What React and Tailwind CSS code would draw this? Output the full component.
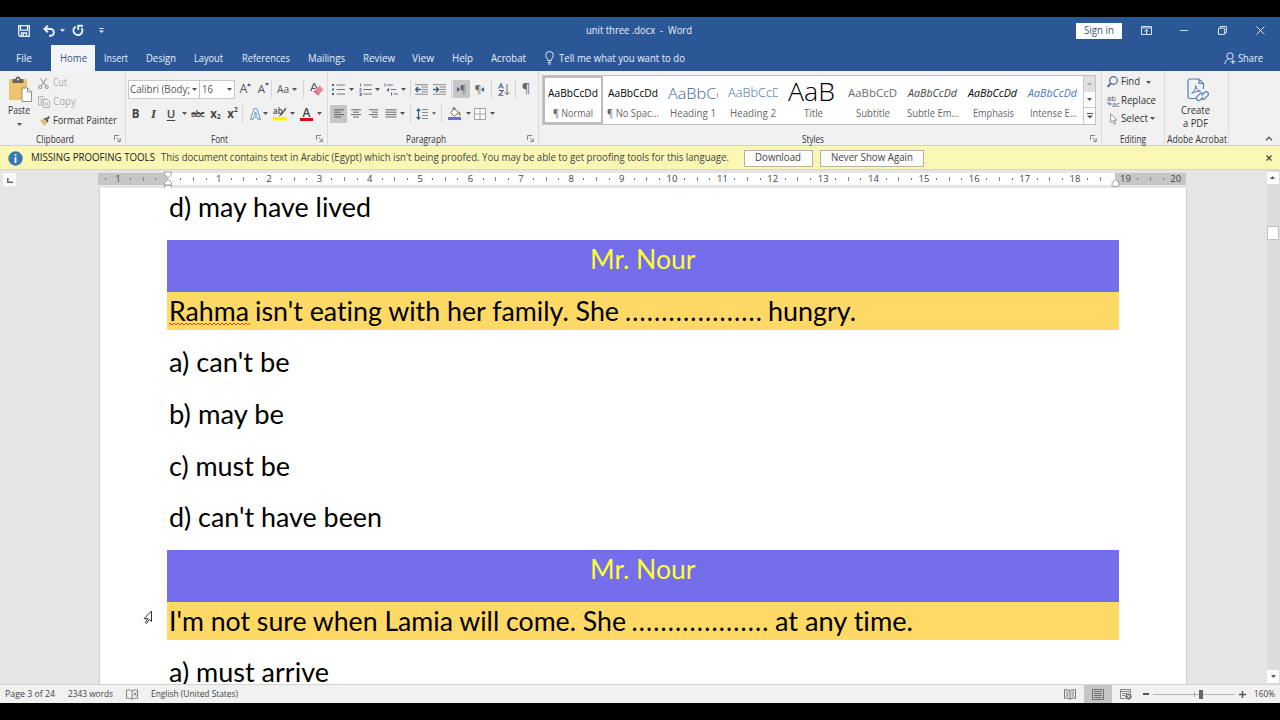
import { useLayoutEffect, useRef } from 'react'

/* Text run fitted to a fixed width, condensed by default or letter-spaced */
function T({ w, spaced, className = '', children }) {
  const box = useRef(null)
  const run = useRef(null)
  useLayoutEffect(() => {
    box.current.style.width = 'auto'
    run.current.style.transform = 'none'
    run.current.style.letterSpacing = '0px'
    const natural = run.current.getBoundingClientRect().width
    box.current.style.width = `${w}px`
    if (spaced) run.current.style.letterSpacing = `${(w - natural) / run.current.textContent.length}px`
    else run.current.style.transform = `scaleX(${w / natural})`
  }, [w, spaced, children])
  return (
    <span ref={box} className={`inline-block shrink-0 text-left whitespace-pre ${className}`}>
      <span ref={run} className="inline-block origin-left">{children}</span>
    </span>
  )
}

function Cell({ className = '', children }) {
  return <div className={`flex shrink-0 items-center justify-center ${className}`}>{children}</div>
}

function Caret({ className = 'w-[10px]', color = '#555' }) {
  return (
    <Cell className={className}>
      <svg width="5" height="3" viewBox="0 0 5 3"><path d="M0 0h5L2.5 3z" fill={color} /></svg>
    </Cell>
  )
}

function Sep({ className = 'h-[18px]' }) {
  return <div className={`w-px shrink-0 bg-[#d4d4d4] ${className}`} />
}

function Launcher() {
  return (
    <svg width="7" height="7" viewBox="0 0 7 7" fill="none" stroke="#777" strokeWidth="0.9">
      <path d="M0.5 5V0.5H5M2.8 2.8l3 3M6.3 3.5v3h-3" />
    </svg>
  )
}

function Group({ label, labelWidth, className, launcher, children }) {
  return (
    <div className={`flex h-[74px] shrink-0 flex-col border-r border-[#dadada] ${className}`}>
      <div className="h-[60px] shrink-0">{children}</div>
      <div className="flex h-[14px] shrink-0 items-center pt-px text-[10px] leading-[14px] text-[#333]">
        <div className="flex flex-1 justify-center"><T w={labelWidth}>{label}</T></div>
        {launcher && <div className="flex w-[15px] justify-center"><Launcher /></div>}
      </div>
    </div>
  )
}

/* Paragraph alignment icon: list of [x1, x2] strokes */
function Lines({ rows, h = 11 }) {
  return (
    <svg width="12" height={h} viewBox={`0 0 12 ${h}`} stroke="#666" strokeWidth="1">
      {rows.map(([a, b], i) => <path key={i} d={`M${a} ${i * 2.4 + 0.8}H${b}`} />)}
    </svg>
  )
}

function TitleBar() {
  return (
    <div className="flex h-[27px] items-center text-[#e8f2ff]">
      <div className="flex w-[586px] items-center pl-[18px]">
        <svg width="12" height="12" viewBox="0 0 12 12" fill="none" stroke="#e4f2fb" strokeWidth="1.3">
          <path d="M0.7 0.7h10.6v10.6H2L0.7 10zM2.5 1v4.2h7V1M3.5 11V8h5v3M5.3 9v2" />
        </svg>
        <svg className="ml-[13px]" width="12" height="12" viewBox="0 0 12 12" fill="none" stroke="#e4f2fb" strokeWidth="1.9">
          <path d="M4.8 0.7L1.3 4l3.5 3.3M1.5 4H7.5a3.4 3.4 0 0 1 0 6.8H6" />
        </svg>
        <Caret className="w-[14px]" color="#dcebf8" />
        <svg className="ml-[3px]" width="12" height="13" viewBox="0 0 12 13" fill="none" stroke="#e4f2fb" strokeWidth="1.9">
          <path d="M3.7 2.6A4.5 4.5 0 1 0 9.6 4M6.2 6V1.7H11" />
        </svg>
        <svg className="ml-[15px]" width="5" height="6" viewBox="0 0 5 6" fill="#dcebf8"><path d="M0.5 0h4v1h-4zM0 2.5h5L2.5 5z" /></svg>
      </div>
      <T w={106} className="text-[10.5px]">unit three .docx  -  Word</T>
      <Cell className="ml-[384px] h-[16px] w-[46px] bg-[#fdfdfe] text-[10.5px] text-[#3b5685]"><T w={30}>Sign in</T></Cell>
      <svg className="ml-[19px]" width="11" height="9" viewBox="0 0 11 9" fill="none" stroke="#d8e8fa" strokeWidth="1">
        <path d="M0.5 0.5h10v8H0.5zM0.5 2h10M5.5 8V3.8M3.5 5.5l2-1.9 2 1.9" />
      </svg>
      <div className="ml-[28px] h-px w-[8px] bg-[#c5d9f2]" />
      <svg className="ml-[30px]" width="9" height="9" viewBox="0 0 9 9" fill="none" stroke="#d8e8fa" strokeWidth="1">
        <path d="M0.5 2.2h6.2v6.2H0.5zM2.2 2V0.5h6.2v6.2H7" />
      </svg>
      <svg className="ml-[29px]" width="9" height="9" viewBox="0 0 9 9" stroke="#d8e8fa" strokeWidth="1"><path d="M0.5 0.5l8 8M8.5 0.5l-8 8" /></svg>
    </div>
  )
}

function Tabs() {
  return (
    <div className="flex h-[27px] items-center pt-px text-[11px] text-[#e6effa]">
      <T w={16} className="ml-[16px]">File</T>
      <Cell className="ml-[19px] h-full w-[44px] bg-[#f3f4f6] text-[#3b5685]"><T w={27}>Home</T></Cell>
      <T w={24} className="ml-[9px]">Insert</T>
      <T w={30} className="ml-[18px]">Design</T>
      <T w={29} className="ml-[18px]">Layout</T>
      <T w={48} className="ml-[19px]">References</T>
      <T w={37} className="ml-[18px]">Mailings</T>
      <T w={32} className="ml-[18px]">Review</T>
      <T w={22} className="ml-[17px]">View</T>
      <T w={21} className="ml-[18px]">Help</T>
      <T w={35} className="ml-[18px]">Acrobat</T>
      <svg className="ml-[19px]" width="9" height="14" viewBox="0 0 9 14" fill="none" stroke="#e6effa" strokeWidth="1">
        <path d="M2.8 9.5C2.8 7.5 0.7 6.8 0.7 4.3a3.8 3.8 0 0 1 7.6 0c0 2.5-2.1 3.2-2.1 5.2zM2.8 11.3h3.4M3.3 13h2.4" />
      </svg>
      <T w={126} className="ml-[5px]">Tell me what you want to do</T>
      <svg className="ml-[539px]" width="12" height="13" viewBox="0 0 12 13" fill="none" stroke="#d8e8fa" strokeWidth="1">
        <circle cx="6" cy="4" r="3.2" /><path d="M0.8 12c0.3-3 1.8-4.6 3.8-5M8.8 7.5v4.6M6.5 9.8h5" />
      </svg>
      <T w={25} className="ml-[2px]">Share</T>
    </div>
  )
}

function Clipboard() {
  return (
    <Group label="Clipboard" labelWidth={38} className="w-[126px]" launcher>
      <div className="flex h-full">
        <div className="flex w-[38px] flex-col items-center pt-[5px]">
          <svg className="ml-[3px]" width="25" height="26" viewBox="0 0 25 26">
            <rect x="1" y="3" width="18" height="21" rx="1" fill="#eec36e" />
            <path d="M4.500 3h3a2.500 2.500 0 0 1 5 0h3v4h-11z" fill="#66625d" />
            <circle cx="10" cy="3.500" r="1" fill="#eee" />
            <path d="M14 12h5.500l4 4v9.500H14z" fill="#fff" stroke="#777" strokeWidth="0.8" />
            <path d="M19.500 12v4h4" fill="none" stroke="#777" strokeWidth="0.8" />
          </svg>
          <T w={22} className="mt-px text-[10.5px] leading-[15px] text-[#333]">Paste</T>
          <Caret className="mt-[3px] h-[6px] w-[10px]" />
        </div>
        <div className="flex flex-col pt-[3px] text-[10.5px] text-[#aaa]">
          <div className="flex h-[18.500px] items-center">
            <svg width="11" height="11" viewBox="0 0 11 11" fill="none" stroke="#999" strokeWidth="1.1">
              <path d="M2.500 0.500l5 7M8.500 0.500l-5 7" /><circle cx="2.300" cy="9" r="1.500" /><circle cx="8.700" cy="9" r="1.500" />
            </svg>
            <T w={14} className="ml-[4px]">Cut</T>
          </div>
          <div className="flex h-[19px] items-center">
            <svg width="12" height="12" viewBox="0 0 12 12" fill="#f3f3f3" stroke="#aaa" strokeWidth="0.9">
              <path d="M0.500 0.500h4.500l1.500 1.500v7h-6zM2 3h3M2 5h3M2 7h3" /><path d="M5.500 3.500H10l1.500 1.500v6.500h-6zM7 7h3M7 9h3" />
            </svg>
            <T w={23} className="ml-[3px]">Copy</T>
          </div>
          <div className="flex h-[19px] items-center text-[#333]">
            <svg className="ml-[2px]" width="10" height="10" viewBox="0 0 10 10">
              <path d="M0 4.500l3-1.500 4 4-2.500 3z" fill="#e8bb66" /><path d="M3.500 2.500l4.200 4.200L8.500 5 5.300 1.700z" fill="#555" /><path d="M6.800 3.200L9.200 0.800" stroke="#555" strokeWidth="2" />
            </svg>
            <T w={64} className="ml-[3px]">Format Painter</T>
          </div>
        </div>
      </div>
    </Group>
  )
}

function FontGroup() {
  return (
    <Group label="Font" labelWidth={17} className="w-[202px]" launcher>
      <div className="flex h-[26px] items-center pt-[10px] pl-[2px] text-[#555]">
        <div className="flex h-[19px] w-[72px] shrink-0 items-center border border-[#c8c8c8] bg-white pl-px text-[11px]">
          <T w={60}>Calibri (Body;</T><Caret className="ml-px w-[7px]" />
        </div>
        <div className="flex h-[19px] w-[35px] shrink-0 items-center border border-l-0 border-[#c8c8c8] bg-white pl-[2px] text-[11px]">
          <T w={11}>16</T><Caret className="ml-[11px] w-[10px]" />
        </div>
        <Cell className="w-[21px] text-[12.500px]">A<svg className="mb-[10px]" width="4" height="3" viewBox="0 0 4 3"><path d="M0 3L2 0l2 3z" fill="#40608e" /></svg></Cell>
        <Cell className="w-[15px] text-[11.500px]">A<svg className="mb-[10px]" width="4" height="3" viewBox="0 0 4 3"><path d="M0 0h4L2 3z" fill="#40608e" /></svg></Cell>
        <Sep />
        <T w={12} className="ml-[5px] text-[11px]">Aa</T>
        <Caret className="w-[10px]" /><div className="w-[4px]" />
        <Sep />
        <svg className="ml-[6px]" width="14" height="13" viewBox="0 0 14 13">
          <path d="M0.800 8L3.700 0.800h1L6.500 5M2 5.500h3.500" fill="none" stroke="#555" strokeWidth="1.200" />
          <path d="M9.500 2.500l4 4-5.500 6-4.500-4z" fill="#e58a9c" /><path d="M3.500 8.500l1.500-1.500 4.500 4L8 12.500z" fill="#d9718a" />
        </svg>
      </div>
      <div className="flex h-[34px] items-center pb-px text-[11.500px] text-[#444]">
        <Cell className="w-[19px] font-bold">B</Cell>
        <Cell className="w-[17px] font-['Liberation_Serif'] text-[13px] font-bold italic">I</Cell>
        <Cell className="w-[18px] font-semibold underline underline-offset-2">U</Cell>
        <Caret className="w-[9px]" />
        <Cell className="w-[17px] text-[9px] font-semibold tracking-[-0.7px]"><span className="line-through">abc</span></Cell>
        <Cell className="w-[19px] font-bold">x<span className="mt-[7px] text-[6.500px]">2</span></Cell>
        <Cell className="w-[15px] font-bold">x<span className="mb-[8px] text-[6.500px]">2</span></Cell>
        <div className="w-[2px]" /><Sep />
        <svg className="ml-[7px]" width="11" height="12" viewBox="0 0 11 12" fill="#fff" stroke="#5f8fc9" strokeWidth="1">
          <path d="M4.200 0.600h2.600l3.700 10.800H8.200L7.400 9H3.600l-0.800 2.400H0.500zM5.500 3.800L4.300 7h2.400z" />
        </svg>
        <Caret className="w-[9px]" />
        <svg className="ml-[3px]" width="14" height="15" viewBox="0 0 14 15">
          <rect x="0" y="11" width="14" height="3.500" fill="#fff200" />
          <path d="M12.500 1.500L7.500 8l-2 2.500 3-1L13.500 3z" fill="#666" />
          <text x="0" y="8" fontSize="8" fontWeight="600" fill="#444">ab</text>
        </svg>
        <Caret className="w-[11px]" />
        <Cell className="ml-[2px] w-[13px] flex-col text-[12px] leading-[11px] font-semibold">A<div className="h-[3px] w-[13px] bg-[#dc0a0a]" /></Cell>
        <Caret className="w-[12px]" />
      </div>
    </Group>
  )
}

function ListIcon({ kind }) {
  return (
    <svg width="14" height="13" viewBox="0 0 14 13" stroke="#777" strokeWidth="1">
      {kind === 'bullet' && <><path d="M4.500 2H13M4.500 6.500H13M4.500 11H13" /><g fill="#40608e" stroke="none"><rect y="1" width="2" height="2" /><rect y="5.500" width="2" height="2" /><rect y="10" width="2" height="2" /></g></>}
      {kind === 'number' && <><path d="M4.500 2H13M4.500 6.500H13M4.500 11H13" /><path d="M1.500 0.500v3M0.500 5.500h1.500v1l-1.500 1.500h2M0.500 10h2v2.500h-2M1 11.200h1" fill="none" stroke="#40608e" strokeWidth="0.800" /></>}
      {kind === 'multi' && <><path d="M3 2H9M6.500 6.500H12M9.500 11H14" /><path d="M1 0.500v3M4.500 5v3h-1.200v-1.500h1M7.500 9.500v3" fill="none" stroke="#40608e" strokeWidth="0.900" /></>}
    </svg>
  )
}

function Indent({ out }) {
  return (
    <svg width="13" height="11" viewBox="0 0 13 11" fill="none">
      <path d="M0 0.700H13M6.500 3H13M6.500 5.400H13M6.500 7.800H13M0 10.200H13" stroke="#888" />
      <path d={out ? 'M6 5.500H1M3 3L0.800 5.500 3 8' : 'M0 5.500H5.200M3.200 3l2.200 2.500L3.200 8'} stroke="#2f6385" strokeWidth="1.500" />
    </svg>
  )
}

function Paragraph() {
  return (
    <Group label="Paragraph" labelWidth={40} className="w-[211px]" launcher>
      <div className="flex h-[26px] items-center pt-[10px]">
        <Cell className="w-[20px] pl-[2px]"><ListIcon kind="bullet" /></Cell><Caret className="w-[7px]" />
        <Cell className="w-[19px] pl-[2px]"><ListIcon kind="number" /></Cell><Caret className="w-[7px]" />
        <Cell className="w-[19px]"><ListIcon kind="multi" /></Cell><Caret className="w-[6px]" />
        <Cell className="w-[4px]" /><Sep />
        <Cell className="w-[21px]"><Indent out /></Cell>
        <Cell className="w-[14px]"><Indent /></Cell>
        <Cell className="w-[5px]" /><Sep />
        <Cell className="ml-px h-[18px] w-[17px] bg-[#c6c6c6] text-[10px] text-[#666]"><svg width="3" height="5" viewBox="0 0 3 5"><path d="M0 0v5l3-2.500z" fill="#2f6385" /></svg>¶</Cell>
        <Cell className="w-[19px] text-[10px] text-[#666]">¶<svg width="3" height="5" viewBox="0 0 3 5"><path d="M3 0v5L0 2.500z" fill="#2f6385" /></svg></Cell>
        <Cell className="w-[2px]" /><Sep />
        <Cell className="w-[23px]">
          <svg width="12" height="13" viewBox="0 0 12 13" fill="none">
            <path d="M0.600 5.500L3 0.500l2.400 5M1.300 4h3.400" stroke="#4272ad" strokeWidth="1.100" />
            <path d="M1 7.500h4L1 12.300h4.300" stroke="#5b4d86" strokeWidth="1.100" />
            <path d="M9 1v10.500M6.800 9.300L9 11.600l2.300-2.300" stroke="#666" />
          </svg>
        </Cell>
        <Sep />
        <Cell className="w-[20px] text-[13px] text-[#666]">¶</Cell>
      </div>
      <div className="flex h-[34px] items-center pb-px">
        <Cell className="ml-[2px] h-[18px] w-[17px] bg-[#c6c6c6]"><Lines rows={[[1, 11], [1, 8], [1, 11], [1, 8]]} h={9} /></Cell>
        <Cell className="w-[17px]"><Lines rows={[[1, 11], [3, 9], [1, 11], [3, 9]]} h={9} /></Cell>
        <Cell className="w-[18px]"><Lines rows={[[2, 11], [5, 11], [2, 11], [5, 11]]} h={9} /></Cell>
        <Cell className="w-[17px]"><Lines rows={[[0.5, 11.5], [0.5, 11.5], [0.5, 11.5], [0.5, 11.5]]} h={9} /></Cell>
        <Caret className="w-[7px]" />
        <Cell className="w-[4px]" /><Sep />
        <Cell className="w-[21px]">
          <svg width="12" height="12" viewBox="0 0 12 12" fill="none">
            <path d="M2.500 1v10M0.700 3L2.500 1l1.800 2M0.700 9l1.800 2 1.800-2" stroke="#2f6385" strokeWidth="1.200" />
            <path d="M6 1.500h6M6 4.500h6M6 7.500h6M6 10.500h6" stroke="#888" />
          </svg>
        </Cell>
        <Caret className="w-[4px]" />
        <Cell className="w-[5px]" /><Sep />
        <Cell className="w-[24px]">
          <svg width="13" height="13" viewBox="0 0 13 13" fill="none">
            <path d="M2.500 5.500L6.500 1.800l4 4-4 3.500zM5 3V0.800h2v2" fill="#fff" stroke="#666" />
            <path d="M10.500 5c1.200 0.700 1.500 2 1.300 3.500" stroke="#666" strokeWidth="1.300" />
            <rect y="10" width="13" height="3" fill="#7367d9" />
          </svg>
        </Cell>
        <Caret className="w-[5px]" />
        <Cell className="w-[17px]">
          <svg width="12" height="12" viewBox="0 0 12 12" fill="#fff" stroke="#999" strokeWidth="0.900"><path d="M0.500 0.500h11v11H0.500zM6 0.500v11M0.500 6h11" /></svg>
        </Cell>
        <Caret className="w-[8px]" />
      </div>
    </Group>
  )
}

const styles = [
  { name: '¶ Normal', nw: 40, sample: 'AaBbCcDd', w: 50, cls: 'text-[10.5px] font-medium text-black' },
  { name: '¶ No Spac...', nw: 52, sample: 'AaBbCcDd', w: 50, cls: 'text-[10.5px] font-medium text-black' },
  { name: 'Heading 1', nw: 46, sample: 'AaBbCc', w: 56, cls: 'font-light text-[15px] text-[#3d6590]' },
  { name: 'Heading 2', nw: 46, sample: 'AaBbCcD', w: 53, cls: 'font-light text-[12.5px] text-[#44709e]' },
  { name: 'Title', nw: 19, sample: 'AaB', w: 47, cls: 'font-light text-[25px] leading-[24px] text-black' },
  { name: 'Subtitle', nw: 34, sample: 'AaBbCcD', w: 49, cls: 'text-[10px] text-[#6b6b6b]' },
  { name: 'Subtle Em...', nw: 52, sample: 'AaBbCcDd', w: 49, cls: 'text-[10.5px] italic text-[#444]' },
  { name: 'Emphasis', nw: 41, sample: 'AaBbCcDd', w: 49, cls: 'text-[10.5px] italic font-medium text-black' },
  { name: 'Intense E...', nw: 47, sample: 'AaBbCcDd', w: 49, cls: 'text-[10.5px] italic text-[#4a78b5]' },
]

function Styles() {
  return (
    <Group label="Styles" labelWidth={22} className="w-[563px]" launcher>
      <div className="mt-[4px] ml-[3px] flex h-[50px] w-[554px] border border-[#c3c3c3] bg-white">
        {styles.map((s, i) => (
          <div key={s.name} className={`flex w-[60px] shrink-0 flex-col items-center border-2 ${i === 0 ? 'border-[#bcbcbc]' : 'border-transparent'}`}>
            <div className={`flex h-[27px] w-[50px] items-center ${i === 4 ? 'pb-[2px]' : 'pt-[4px]'} ${s.w > 50 ? 'overflow-hidden' : ''}`}>
              <T w={s.w} className={s.cls}>{s.sample}</T>
            </div>
            <T w={s.nw} className="mt-px text-[10.5px] leading-[15px] text-[#666]">{s.name}</T>
          </div>
        ))}
        <div className="flex w-[12px] flex-col border-l border-[#c8c8c8]">
          <Caret className="h-[16px] rotate-180 bg-[#e0e0e0]" color="#aaa" />
          <Caret className="h-[16px] border-b border-[#c8c8c8]" />
          <Cell className="h-[16px]"><svg width="6" height="6" viewBox="0 0 6 6" fill="#555"><path d="M0 0h6v1H0zM0 2.500h6L3 5.500z" /></svg></Cell>
        </div>
      </div>
    </Group>
  )
}

function Editing() {
  return (
    <Group label="Editing" labelWidth={26} className="w-[63px]">
      <div className="flex flex-col pt-[2px] pl-[5px] text-[10.5px] text-[#333]">
        <div className="flex h-[18.500px] items-center">
          <svg width="11" height="12" viewBox="0 0 11 12" fill="none" stroke="#44678f"><circle cx="6.500" cy="4.500" r="3.800" strokeWidth="1.200" /><path d="M3.800 7.300L0.600 11" strokeWidth="1.800" /></svg>
          <T w={19} className="ml-[3px]">Find</T><Caret className="ml-[4px] w-[8px]" />
        </div>
        <div className="flex h-[18px] items-center">
          <svg width="13" height="12" viewBox="0 0 13 12">
            <text x="0" y="5.500" fontSize="7.500" fill="#555">ab</text><text x="5" y="11.500" fontSize="7.500" fill="#40608e">ac</text>
            <path d="M1 7v2h3M2.800 7.500L4.300 9l-1.500 1.500" fill="none" stroke="#40608e" strokeWidth="0.800" />
          </svg>
          <T w={35} className="ml-px">Replace</T>
        </div>
        <div className="flex h-[18px] items-center">
          <svg className="ml-[3px]" width="8" height="12" viewBox="0 0 8 12" fill="#fff" stroke="#888" strokeWidth="0.900"><path d="M0.600 0.800v8.700l2-1.800 1.500 3.500 1.400-0.600L4 7.200h3z" /></svg>
          <T w={27} className="ml-[3px]">Select</T><Caret className="w-[8px]" />
        </div>
      </div>
    </Group>
  )
}

function Acrobat() {
  return (
    <Group label="Adobe Acrobat" labelWidth={60} className="w-[64px]">
      <div className="flex flex-col items-center pt-[7px] pr-[2px] text-[10.500px] leading-[13px] text-[#333]">
        <svg className="ml-[5px]" width="22" height="26" viewBox="0 0 22 26" fill="none" stroke="#5680b8" strokeWidth="1.200">
          <path d="M9 20.500H3a2 2 0 0 1-2-2V3a2 2 0 0 1 2-2h9l4.500 4.500V11M12 1v4.500h4.500" />
          <path d="M4.500 15.500c2.500-1.500 4.500-5 4.200-8 0.500 3.500 2.300 5.300 4.800 5.500-3.500 0-6.500 1-9 2.500z" strokeWidth="1" />
          <path d="M14.500 17.500l3-3a2.200 2.200 0 0 1 3.200 3.200l-3 3a2.200 2.200 0 0 1-3 0M16.300 18.800l-3 3a2.200 2.200 0 0 1-3.200-3.200l3-3a2.200 2.200 0 0 1 3 0" />
        </svg>
        <T w={29}>Create</T>
        <T w={25}>a PDF</T>
      </div>
    </Group>
  )
}

/* One tick cell per quarter centimetre, 0 at the left margin */
const ticks = Array.from({ length: 86 }, (_, i) => i - 5)

function Ruler() {
  return (
    <div className="relative ml-[98px] flex h-[12px] w-[1088px]">
      <div className="w-[70px] bg-[#c6c6c6]" />
      <div className="w-[947px] bg-white" />
      <div className="flex-1 bg-[#c6c6c6]" />
      <div className="absolute inset-y-0 left-[1px] flex text-[9.500px] text-[#444]">
        {ticks.map((k) => (
          <Cell key={k} className="w-[12.6px]">
            {k !== 0 && k % 4 === 0 && <span>{Math.abs(k / 4)}</span>}
            {k % 2 !== 0 && k !== 75 && <span className="h-[1.500px] w-px bg-[#777]" />}
            {k % 2 === 0 && k % 4 !== 0 && <span className="h-[4px] w-px bg-[#888]" />}
          </Cell>
        ))}
      </div>
      <svg className="absolute -top-[2px] left-[65px]" width="10" height="19" viewBox="0 0 10 19" fill="#fff" stroke="#999" strokeWidth="0.900">
        <path d="M1.500 1h7v2.500L5 7 1.500 3.500zM5 8.500l3.500 3V14h-7v-2.500zM1.500 14.500h7V18h-7z" />
      </svg>
      <svg className="absolute top-[6px] left-[1013px]" width="9" height="8" viewBox="0 0 9 8" fill="#fff" stroke="#999" strokeWidth="0.900"><path d="M4.500 0.600L8 4v3.300H1V4z" /></svg>
    </div>
  )
}

function Banner() {
  return (
    <div className="h-[51.67px] bg-[#746dec] text-center text-[#ffff2c]"><T w={105.5}>Mr. Nour</T></div>
  )
}

function Question({ children }) {
  return (
    <div className="h-[51.67px]"><div className="flex h-[38px] bg-[#fed966] pl-[2.5px]">{children}</div></div>
  )
}

function Answer({ w, children }) {
  return <div className="h-[51.67px] pl-[2.5px]"><T w={w}>{children}</T></div>
}

function Page() {
  return (
    <div className="relative ml-[98.5px] h-[496px] w-[1088px] shrink-0 border-r border-l border-[#cfcfcf] bg-white pl-[67px] font-['Lato'] text-[26px] leading-[38px] text-black [font-variant-ligatures:none]">
      <div className="w-[952px]">
        <Answer w={202}>d) may have lived</Answer>
        <Banner />
        <Question>
          <span className="relative">
            <T w={80}>Rahma</T>
            <svg className="absolute bottom-[4px] left-0" width="82" height="4" viewBox="0 0 82 4" fill="none" stroke="#d1571c" strokeWidth="1">
              <path d={`M0 3${Array.from({ length: 41 }, (_, i) => `L${i * 2 + 1} ${i % 2 ? 3 : 1}`).join('')}`} />
            </svg>
          </span>
          <T w={364} className="ml-[6px]">isn't eating with her family. She</T>
          <T w={138} spaced className="ml-[6px]">...................</T>
          <T w={88} className="ml-[5px]">hungry.</T>
        </Question>
        <Answer w={120.5}>a) can't be</Answer>
        <Answer w={115}>b) may be</Answer>
        <Answer w={121}>c) must be</Answer>
        <Answer w={213}>d) can't have been</Answer>
        <Banner />
        <Question>
          <T w={457}>I'm not sure when Lamia will come. She</T>
          <T w={138} spaced className="ml-[5.5px]">...................</T>
          <T w={138} className="ml-[5px]">at any time.</T>
        </Question>
        <Answer w={160}>a) must arrive</Answer>
      </div>
      <svg className="absolute top-[422px] left-[43px]" width="11" height="15" viewBox="0 0 11 15" fill="#fff" stroke="#333" strokeWidth="1">
        <path d="M8.500 1v10.500L6.500 9.300 3.500 13.500 2.300 12.500 5 8.700H1z" />
      </svg>
    </div>
  )
}

function StatusBar() {
  return (
    <div className="flex h-[19px] items-center border-t border-[#d4d4d4] bg-[#f1f1f1] text-[9.500px] text-[#444]">
      <T w={50} className="ml-[5px]">Page 3 of 24</T>
      <T w={45} className="ml-[13px]">2343 words</T>
      <svg className="ml-[13px]" width="12" height="11" viewBox="0 0 12 11" fill="none" stroke="#777" strokeWidth="0.900">
        <path d="M6 2v8M6 1.800C4.500 0.800 2.500 0.800 0.500 1v8.200c2 0 4 0 5.500 1M6 1.800C7 1 9 0.800 11.500 1v8.200c-2 0-4 0-5.500 1M7.800 3.500l2.500 3M10.300 3.500l-2.500 3" />
      </svg>
      <T w={87} className="ml-[12.5px]">English (United States)</T>
      <svg className="ml-[826.5px]" width="12" height="11" viewBox="0 0 12 11" fill="none" stroke="#666" strokeWidth="0.900">
        <path d="M6 1.500v9M6 1.500C4.500 0.700 2.500 0.700 0.500 0.700v8.500c2 0 4 0 5.500 0.800M6 1.500c1.500-0.800 3.500-0.800 5.500-0.800v8.500c-2 0-4 0-5.500 0.800M2 3h2.500M2 5h2.500M2 7h2.500M7.500 3H10M7.500 5H10M7.500 7H10" />
      </svg>
      <Cell className="ml-[8px] h-full w-[28px] bg-[#c6c6c6]">
        <svg width="12" height="11" viewBox="0 0 12 11" fill="none" stroke="#666" strokeWidth="0.900"><path d="M0.500 0.500h11v10H0.500zM2 2.500h8M2 4.500h8M2 6.500h8M2 8.500h8" /></svg>
      </Cell>
      <svg className="ml-[8px]" width="12" height="11" viewBox="0 0 12 11" fill="none" stroke="#777" strokeWidth="0.900">
        <path d="M5 9.500H0.500v-9h10v4M0.500 2.500h10M2 4.500h5M2 6.500h3" /><circle cx="8.500" cy="7.500" r="2.800" fill="#777" /><path d="M7 6l3 2.500M7.500 9l2-3" stroke="#eee" />
      </svg>
      <div className="ml-[11px] h-[1.500px] w-[6px] bg-[#555]" />
      <div className="relative ml-[4px] h-px w-[82px] bg-[#b5b5b5]">
        <div className="absolute -top-[2px] left-[41px] h-[5px] w-px bg-[#a5a5a5]" />
        <div className="absolute -top-[4px] left-[46px] h-[9px] w-[4px] bg-[#666]" />
      </div>
      <svg className="ml-[4px]" width="7" height="7" viewBox="0 0 7 7" stroke="#555" strokeWidth="1.400"><path d="M3.500 0v7M0 3.500h7" /></svg>
      <T w={21} className="ml-[8px]">160%</T>
    </div>
  )
}

function ScrollBar() {
  return (
    <div className="flex w-[13px] shrink-0 flex-col bg-[#dcdcdc] pt-[2px]">
      <Caret className="h-[12px] w-[12px] rotate-180 bg-white" />
      <div className="mt-[42px] h-[14px] w-[12px] border border-[#c2c2c2] bg-white" />
      <Caret className="mt-auto mb-px h-[13px] w-[12px] bg-white" />
    </div>
  )
}

export default function App() {
  return (
    <div className="flex h-[720px] w-[1280px] flex-col overflow-hidden bg-black py-[17px] font-['Open_Sans','Noto_Sans',sans-serif]">
      <div className="h-[54px] shrink-0 bg-[#2b5797]">
        <TitleBar />
        <Tabs />
      </div>
      <div className="flex h-[75px] shrink-0 border-b border-[#d2d2cc] bg-[#f1f1f1]">
        <Clipboard />
        <FontGroup />
        <Paragraph />
        <Styles />
        <Editing />
        <Acrobat />
        <svg className="mt-[65px] ml-[36px]" width="8" height="5" viewBox="0 0 8 5" fill="none" stroke="#555" strokeWidth="1.300"><path d="M1 4.200l3-3 3 3" /></svg>
      </div>
      <div className="flex h-[24px] shrink-0 items-center border-b border-[#d8d8c8] bg-[#faf7b4] pt-px text-[10.500px] text-[#444]">
        <svg className="ml-[8px]" width="15" height="15" viewBox="0 0 15 15"><circle cx="7.500" cy="7.500" r="7.200" fill="#3a77b0" /><path d="M7.500 6v6M7.500 3v1.800" stroke="#fff" strokeWidth="1.800" /></svg>
        <T w={124} className="ml-[7.500px] text-[#222]">MISSING PROOFING TOOLS</T>
        <T w={568} className="ml-[6.500px]">This document contains text in Arabic (Egypt) which isn't being proofed. You may be able to get proofing tools for this language.</T>
        <Cell className="ml-[14.500px] h-[17px] w-[69px] border border-[#b4b4a4] bg-[#fdfdfd]"><T w={46}>Download</T></Cell>
        <Cell className="ml-[7px] h-[17px] w-[104px] border border-[#b4b4a4] bg-[#fdfdfd]"><T w={82}>Never Show Again</T></Cell>
        <svg className="ml-[342px]" width="6" height="6" viewBox="0 0 6 6" stroke="#444" strokeWidth="1.200"><path d="M0.500 0.500l5 5M5.500 0.500l-5 5" /></svg>
      </div>
      <div className="flex h-[514px] shrink-0 bg-[#e5e5e5]">
        <div className="flex w-[1267px] flex-col overflow-hidden">
          <div className="flex h-[18.400px] shrink-0 pt-[3px]">
            <div className="-mr-[16px] ml-[3px] flex h-[13px] w-[13px] shrink-0 items-end justify-center bg-[#fafafa] pb-[3px]">
              <svg width="6" height="5" viewBox="0 0 6 5" fill="none" stroke="#666" strokeWidth="1.500"><path d="M0.800 0v4.200H6" /></svg>
            </div>
            <Ruler />
          </div>
          <Page />
        </div>
        <ScrollBar />
      </div>
      <div className="shrink-0"><StatusBar /></div>
    </div>
  )
}
